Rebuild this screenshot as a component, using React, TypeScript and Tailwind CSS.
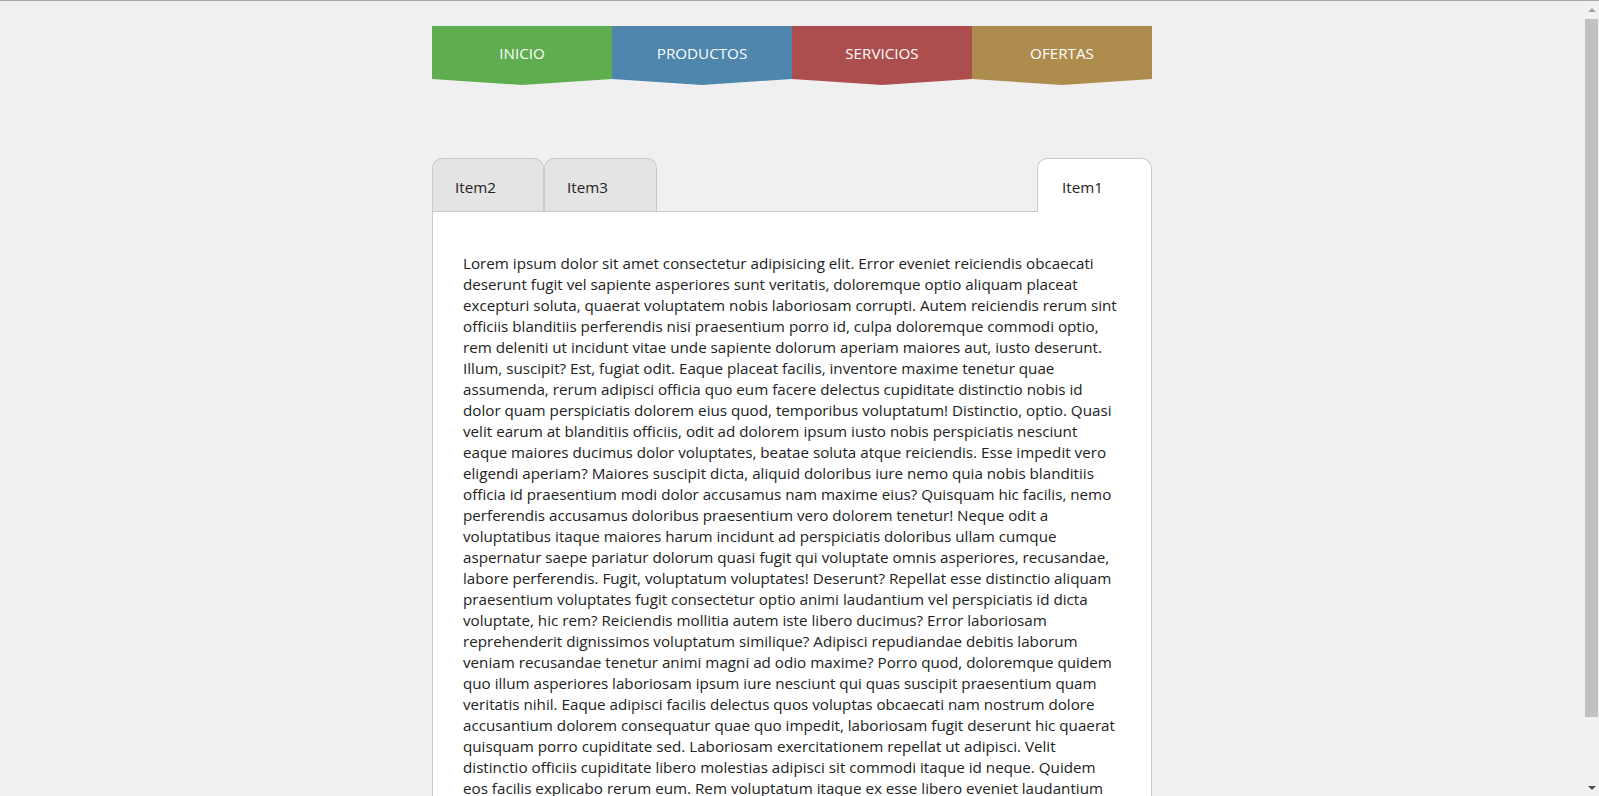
import React from "react";

const menu = [
  { label: "INICIO", bg: "bg-[#5ead4e]" },
  { label: "PRODUCTOS", bg: "bg-[#4e86ad]" },
  { label: "SERVICIOS", bg: "bg-[#ad4e4e]" },
  { label: "OFERTAS", bg: "bg-[#ad8c4e]" },
];

const lines = [
  "Lorem ipsum dolor sit amet consectetur adipisicing elit. Error eveniet reiciendis obcaecati",
  "deserunt fugit vel sapiente asperiores sunt veritatis, doloremque optio aliquam placeat",
  "excepturi soluta, quaerat voluptatem nobis laboriosam corrupti. Autem reiciendis rerum sint",
  "officiis blanditiis perferendis nisi praesentium porro id, culpa doloremque commodi optio,",
  "rem deleniti ut incidunt vitae unde sapiente dolorum aperiam maiores aut, iusto deserunt.",
  "Illum, suscipit? Est, fugiat odit. Eaque placeat facilis, inventore maxime tenetur quae",
  "assumenda, rerum adipisci officia quo eum facere delectus cupiditate distinctio nobis id",
  "dolor quam perspiciatis dolorem eius quod, temporibus voluptatum! Distinctio, optio. Quasi",
  "velit earum at blanditiis officiis, odit ad dolorem ipsum iusto nobis perspiciatis nesciunt",
  "eaque maiores ducimus dolor voluptates, beatae soluta atque reiciendis. Esse impedit vero",
  "eligendi aperiam? Maiores suscipit dicta, aliquid doloribus iure nemo quia nobis blanditiis",
  "officia id praesentium modi dolor accusamus nam maxime eius? Quisquam hic facilis, nemo",
  "perferendis accusamus doloribus praesentium vero dolorem tenetur! Neque odit a",
  "voluptatibus itaque maiores harum incidunt ad perspiciatis doloribus ullam cumque",
  "aspernatur saepe pariatur dolorum quasi fugit qui voluptate omnis asperiores, recusandae,",
  "labore perferendis. Fugit, voluptatum voluptates! Deserunt? Repellat esse distinctio aliquam",
  "praesentium voluptates fugit consectetur optio animi laudantium vel perspiciatis id dicta",
  "voluptate, hic rem? Reiciendis mollitia autem iste libero ducimus? Error laboriosam",
  "reprehenderit dignissimos voluptatum similique? Adipisci repudiandae debitis laborum",
  "veniam recusandae tenetur animi magni ad odio maxime? Porro quod, doloremque quidem",
  "quo illum asperiores laboriosam ipsum iure nesciunt qui quas suscipit praesentium quam",
  "veritatis nihil. Eaque adipisci facilis delectus quos voluptas obcaecati nam nostrum dolore",
  "accusantium dolorem consequatur quae quo impedit, laboriosam fugit deserunt hic quaerat",
  "quisquam porro cupiditate sed. Laboriosam exercitationem repellat ut adipisci. Velit",
  "distinctio officiis cupiditate libero molestias adipisci sit commodi itaque id neque. Quidem",
  "eos facilis explicabo rerum eum. Rem voluptatum itaque ex esse libero eveniet laudantium",
  "nesciunt, quibusdam sint voluptas. Quae, dolorum.",
];

export default function App() {
  return (
    <div className="h-screen flex flex-col bg-[#f0f0f0] border-t border-[#a8a8a8] font-['Open_Sans','Noto_Sans',sans-serif] text-[#222]">
      <div className="flex-1 min-h-0 flex">
        <main className="flex-1 overflow-hidden">
          <div className="w-[720px] mx-auto pt-[25px] pb-[12px]">
            {/* top menu */}
            <nav className="flex">
              {menu.map((m) => (
                <a
                  key={m.label}
                  href="#"
                  className={`w-[180px] h-[59px] pb-[5px] flex items-center justify-center text-white text-[15.2px] ${m.bg} [clip-path:polygon(0_0,100%_0,100%_53px,50%_59px,0_53px)]`}
                >
                  {m.label}
                </a>
              ))}
            </nav>

            {/* tabs */}
            <div className="mt-[73px] flex items-start h-[54px] relative z-10 text-[15.2px]">
              <div className="w-[112px] h-[53px] flex items-center pl-[22px] pt-[4px] bg-[#e4e4e4] border border-b-0 border-[#c9c9c9] rounded-t-[10px]">
                Item2
              </div>
              <div className="w-[113px] h-[53px] flex items-center pl-[22px] pt-[4px] bg-[#e4e4e4] border border-b-0 border-[#c9c9c9] rounded-t-[10px]">
                Item3
              </div>
              <div className="ml-auto w-[115px] h-[54px] flex items-center pl-[24px] pt-[3px] bg-white border border-b-0 border-[#c9c9c9] rounded-t-[10px]">
                Item1
              </div>
            </div>
            <div className="-mt-px bg-white border border-[#c9c9c9] pl-[30px] pr-[20px] pt-[41px] pb-[30px] text-[15.2px] leading-[21px]">
              <p>
                {lines.map((l, i) => (
                  <span key={i} className="block whitespace-nowrap">
                    {l}
                  </span>
                ))}
              </p>
            </div>
          </div>
        </main>

        {/* window scrollbar */}
        <div className="w-[15px] flex flex-col items-center bg-[#f1f1f1]">
          <div className="h-[17px] w-full flex items-center justify-center">
            <div className="w-0 h-0 border-x-[4px] border-x-transparent border-b-[4px] border-b-[#a3a3a3]" />
          </div>
          <div className="mt-[1px] w-[13px] h-[698px] bg-[#c1c1c1]" />
          <div className="flex-1" />
          <div className="h-[17px] w-full flex items-center justify-center">
            <div className="w-0 h-0 border-x-[4px] border-x-transparent border-t-[4px] border-t-[#505050]" />
          </div>
        </div>
      </div>
    </div>
  );
}
